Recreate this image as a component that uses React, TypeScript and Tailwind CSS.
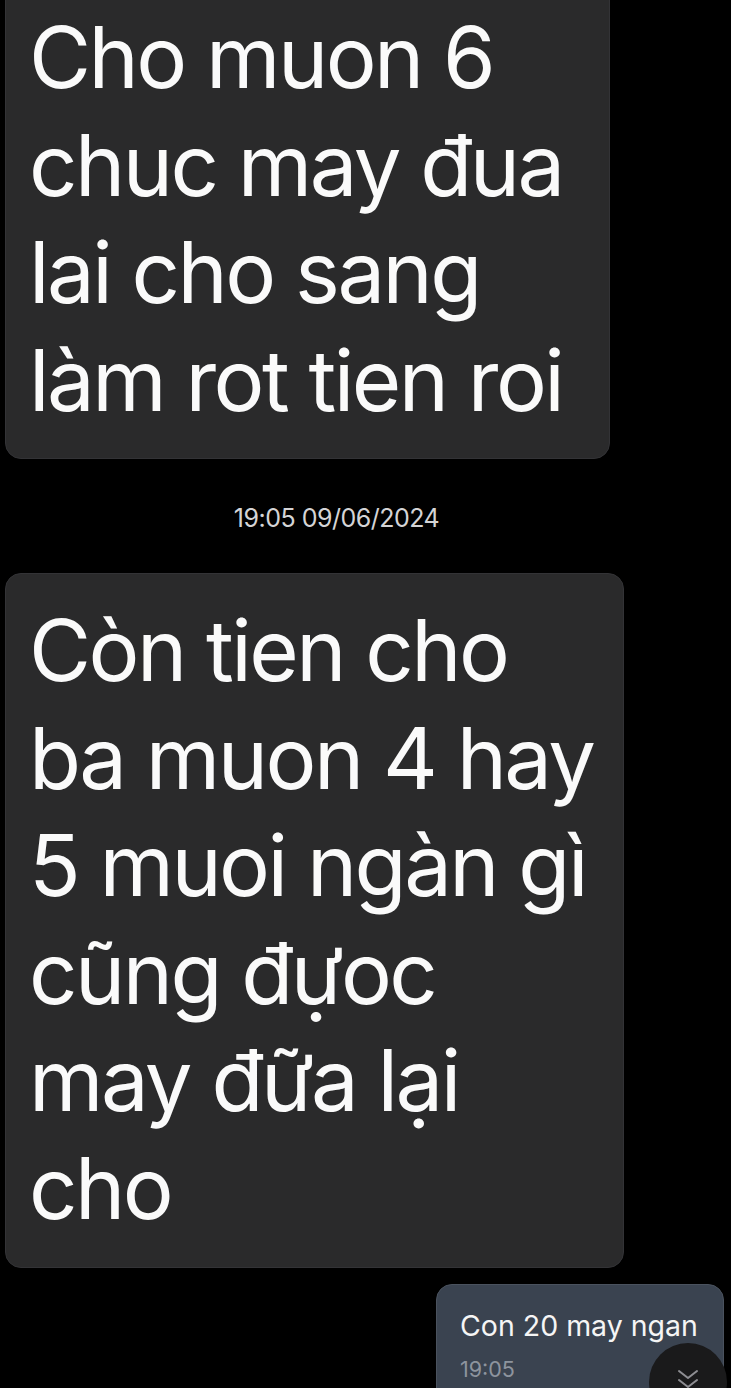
import React from "react";

const font = { fontFamily: "Inter, 'Noto Sans', sans-serif" };

export default function App() {
  return (
    <div
      className="relative w-[731px] h-[1388px] overflow-hidden bg-black text-white"
      style={font}
    >
      <div className="flex flex-col pl-[5px]">
        <div className="mt-[-22px] w-[605px] rounded-[16px] border border-[#333336] bg-[#2a2a2b] pl-[23px] pr-[10px] pt-[25px] pb-[24px] text-[85px] leading-[107.5px] tracking-[-0.03em] text-[#fafafa]">
          <div>Cho muon 6</div>
          <div>chuc may đua</div>
          <div>lai cho sang</div>
          <div>làm rot tien roi</div>
        </div>

        <div className="mt-[46px] flex justify-center pr-[63px] text-[25px] leading-[26px] tracking-[-0.02em] text-[#d4d4d6]">
          19:05 09/06/2024
        </div>

        <div className="mt-[42px] w-[619px] rounded-[16px] border border-[#333336] bg-[#2a2a2b] pl-[23px] pr-[10px] pt-[23px] pb-[25px] text-[85px] leading-[107.5px] tracking-[-0.03em] text-[#fafafa]">
          <div>Còn tien cho</div>
          <div>ba muon 4 hay</div>
          <div>5 muoi ngàn gì</div>
          <div>cũng đựoc</div>
          <div>may đữa lại</div>
          <div>cho</div>
        </div>

        <div className="mt-[16px] flex justify-end pr-[7px]">
          <div className="h-[130px] w-[288px] rounded-[16px] border border-[#4a525e] bg-[#3a4350] pl-[23px] pt-[24px]">
            <div className="text-[28.5px] leading-[34px] text-[#f5f5f5]">
              Con 20 may ngan
            </div>
            <div className="mt-[14px] text-[21.5px] leading-[24px] text-[#8d949e]">
              19:05
            </div>
          </div>
        </div>
      </div>

      <div className="absolute left-[649px] top-[1343px] flex h-[78px] w-[78px] items-start justify-center rounded-full bg-[#1a1a1b]">
        <svg
          className="mt-[26px]"
          width="22"
          height="24"
          viewBox="0 0 22 24"
          fill="none"
          stroke="#8e8e93"
          strokeWidth="2"
          strokeLinecap="round"
          strokeLinejoin="round"
        >
          <path d="M2 2 L11 9 L20 2" />
          <path d="M2 11 L11 18 L20 11" />
        </svg>
      </div>
    </div>
  );
}
